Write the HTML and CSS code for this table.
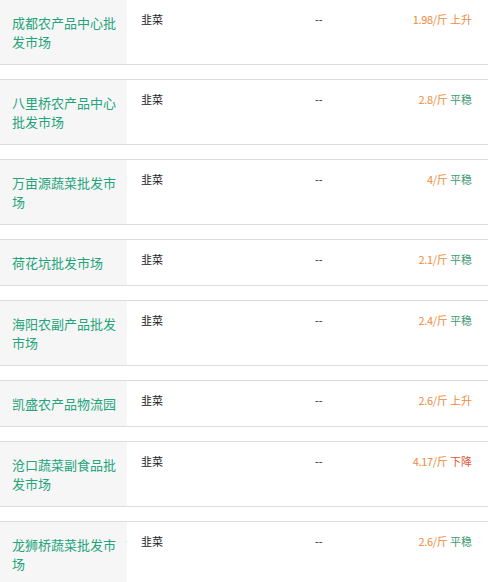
FILE: index.html
```html
<!DOCTYPE html>
<html lang="zh-CN">
<head>
<meta charset="utf-8">
<title>韭菜行情</title>
<link rel="stylesheet" href="styles.css">
</head>
<body>
<div class="list">
  <div class="row">
    <div class="market">成都农产品中心批发市场</div>
    <div class="cell">韭菜</div>
    <div class="cell">--</div>
    <div class="cell price"><span class="num">1.98/斤</span> <span class="up">上升</span></div>
  </div>
  <div class="row">
    <div class="market">八里桥农产品中心批发市场</div>
    <div class="cell">韭菜</div>
    <div class="cell">--</div>
    <div class="cell price"><span class="num">2.8/斤</span> <span class="flat">平稳</span></div>
  </div>
  <div class="row">
    <div class="market">万亩源蔬菜批发市场</div>
    <div class="cell">韭菜</div>
    <div class="cell">--</div>
    <div class="cell price"><span class="num">4/斤</span> <span class="flat">平稳</span></div>
  </div>
  <div class="row">
    <div class="market">荷花坑批发市场</div>
    <div class="cell">韭菜</div>
    <div class="cell">--</div>
    <div class="cell price"><span class="num">2.1/斤</span> <span class="flat">平稳</span></div>
  </div>
  <div class="row">
    <div class="market">海阳农副产品批发市场</div>
    <div class="cell">韭菜</div>
    <div class="cell">--</div>
    <div class="cell price"><span class="num">2.4/斤</span> <span class="flat">平稳</span></div>
  </div>
  <div class="row">
    <div class="market">凯盛农产品物流园</div>
    <div class="cell">韭菜</div>
    <div class="cell">--</div>
    <div class="cell price"><span class="num">2.6/斤</span> <span class="up">上升</span></div>
  </div>
  <div class="row">
    <div class="market">沧口蔬菜副食品批发市场</div>
    <div class="cell">韭菜</div>
    <div class="cell">--</div>
    <div class="cell price"><span class="num">4.17/斤</span> <span class="down">下降</span></div>
  </div>
  <div class="row">
    <div class="market">龙狮桥蔬菜批发市场</div>
    <div class="cell">韭菜</div>
    <div class="cell">--</div>
    <div class="cell price"><span class="num">2.6/斤</span> <span class="flat">平稳</span></div>
  </div>
</div>
</body>
</html>
```

FILE: styles.css
```css
html, body {
  margin: 0;
  padding: 0;
  background: #fff;
}
body {
  font-family: "Noto Sans CJK SC", "Microsoft YaHei", sans-serif;
  color: #333;
}
.list {
  margin-top: -1px;
}
.row {
  display: grid;
  grid-template-columns: 127px 174px 1fr auto;
  border-top: 1px solid #dcdcdc;
  border-bottom: 1px solid #dcdcdc;
  margin-bottom: 14px;
}
.market {
  background: #f6f6f6;
  color: #23a47b;
  font-size: 13px;
  line-height: 19px;
  padding: 13px 10px 13px 12px;
}
.cell {
  font-size: 11px;
  line-height: 13px;
  padding: 13px 0 0 14px;
  color: #222;
}
.price {
  text-align: right;
  padding-right: 16px;
  padding-left: 0;
}
.num {
  color: #ef8a3c;
  letter-spacing: -0.3px;
}
.up { color: #ef8a3c; }
.flat { color: #3f9b70; }
.down { color: #e05a3c; }
```
